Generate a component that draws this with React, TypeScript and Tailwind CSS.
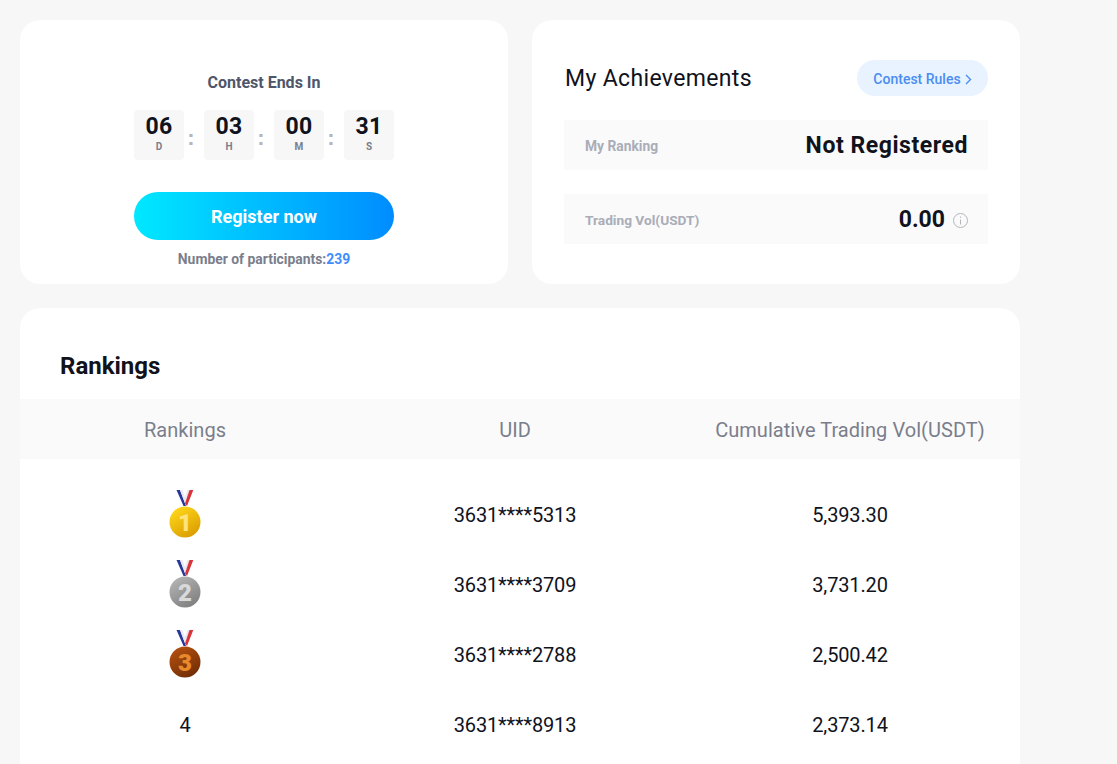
const FONT = "font-['Roboto','Liberation_Sans',sans-serif]";

const countdown = [
  { value: "06", unit: "D" },
  { value: "03", unit: "H" },
  { value: "00", unit: "M" },
  { value: "31", unit: "S" },
];

const rows = [
  { rank: 1, uid: "3631****5313", vol: "5,393.30" },
  { rank: 2, uid: "3631****3709", vol: "3,731.20" },
  { rank: 3, uid: "3631****2788", vol: "2,500.42" },
  { rank: 4, uid: "3631****8913", vol: "2,373.14" },
];

const medalColors: Record<number, { id: string; light: string; dark: string; text: string }> = {
  1: { id: "gold", light: "#ffd91a", dark: "#d99a00", text: "#ffe27a" },
  2: { id: "silver", light: "#b5b5b5", dark: "#7d7d7d", text: "#d9d9d9" },
  3: { id: "bronze", light: "#b5500f", dark: "#6e2c05", text: "#e88a2c" },
};

function Medal({ rank }: { rank: number }) {
  const c = medalColors[rank];
  return (
    <svg width="32" height="50" viewBox="0 0 32 50">
      <defs>
        <linearGradient id={c.id} x1="0.2" y1="0" x2="0.8" y2="1">
          <stop offset="0" stopColor={c.light} />
          <stop offset="1" stopColor={c.dark} />
        </linearGradient>
      </defs>
      {/* ribbon */}
      <path d="M7.5 0 L11 0 L17 16 L14.5 16 Z" fill="#27389a" />
      <path d="M11 0 L13.5 0 L17.5 12 L16.5 14.5 Z" fill="#e9e9f2" />
      <path d="M18.5 0 L20.5 0 L16.3 13 L15 9.5 Z" fill="#e9e9f2" />
      <path d="M20.5 0 L24.3 0 L18 16 L16 13.5 Z" fill="#d8343a" />
      <circle cx="16" cy="32" r="15.5" fill={`url(#${c.id})`} />
      <text x="16" y="40.5" textAnchor="middle" fontSize="24" fontWeight="900" fill={c.text} fontFamily="Roboto, sans-serif">
        {rank}
      </text>
    </svg>
  );
}

export default function App() {
  return (
    <div className={`${FONT} h-[764px] w-[1117px] overflow-hidden bg-[#f7f7f7] p-5`}>
      <div className="flex w-[1000px] flex-col gap-6">
        <div className="flex gap-6">
          {/* countdown card */}
          <div className="flex h-[264px] w-[488px] flex-col items-center rounded-[20px] bg-white pt-[53px]">
            <h2 className="text-[16px] leading-5 font-bold text-[#50566a]">Contest Ends In</h2>
            <div className="mt-[17px] flex w-[260px] justify-between">
              {countdown.map((item, i) => (
                <div key={item.unit} className="flex items-center">
                  {i > 0 && <span className="w-5 pt-[5px] pr-[6px] text-center font-['Liberation_Sans',sans-serif] text-[22px] leading-none font-bold text-[#b4b6be]">:</span>}
                  <div className="flex h-[50px] w-[50px] flex-col items-center rounded bg-[#f7f7f7] pt-[3px]">
                    <span className="text-[23px] leading-[27px] font-bold tracking-[0.3px] text-[#10121c]">{item.value}</span>
                    <span className="text-[10px] leading-[14px] font-bold text-[#7a7e8c]">{item.unit}</span>
                  </div>
                </div>
              ))}
            </div>
            <button className="mt-8 h-12 w-[260px] rounded-full bg-gradient-to-r from-[#00e8ff] to-[#008cff] pt-[2px] text-lg font-bold text-white">
              Register now
            </button>
            <p className="mt-[9px] text-[13.9px] leading-5 font-bold text-[#7a7e8c]">
              Number of participants:<span className="text-[#3f8cff]">239</span>
            </p>
          </div>

          {/* achievements card */}
          <div className="h-[264px] w-[488px] rounded-[20px] bg-white px-8 pt-10">
            <div className="flex h-9 items-center justify-between">
              <h2 className="h-9 pt-[1px] pl-px text-[23px] leading-9 tracking-[0.35px] text-[#10121c]">My Achievements</h2>
              <a className="flex h-9 w-[131px] items-center justify-center gap-1 rounded-full bg-[#e8f3ff] pt-[2px] text-sm font-medium text-[#4a8df0]">
                Contest Rules
                <svg width="7" height="11" viewBox="0 0 7 11" fill="none" stroke="#4a8df0" strokeWidth="1.4">
                  <path d="M1 1l4.5 4.5L1 10" />
                </svg>
              </a>
            </div>
            <div className="mt-6 flex h-[50px] items-center justify-between bg-[#fafafa] px-5 pt-[3px]">
              <span className="pl-px text-[13.8px] font-bold text-[#a9adb8]">My Ranking</span>
              <span className="text-[23px] font-bold tracking-[0.55px] text-[#10121c]">Not Registered</span>
            </div>
            <div className="mt-6 flex h-[50px] items-center justify-between bg-[#fafafa] px-5 pt-[2px]">
              <span className="pl-px text-[13.7px] font-bold text-[#a9adb8]">Trading Vol(USDT)</span>
              <span className="flex items-center gap-2">
                <span className="text-[23px] font-bold text-[#10121c]">0.00</span>
                <svg width="15" height="15" viewBox="0 0 15 15" fill="none" stroke="#b4b6be">
                  <circle cx="7.5" cy="7.5" r="7" />
                  <path d="M7.5 6.5v5M7.5 3.5v1.3" />
                </svg>
              </span>
            </div>
          </div>
        </div>

        {/* rankings card */}
        <div className="h-[500px] rounded-[20px] bg-white pt-[42px]">
          <h2 className="px-10 text-[24px] leading-8 font-bold text-[#10121c]">Rankings</h2>
          <div className="mt-[17px] grid h-[60px] grid-cols-[330px_330px_340px] items-center bg-[#fafafa] pt-[2px] text-xl font-[450] tracking-[0.05px] text-[#7a7e8c]">
            <span className="text-center">Rankings</span>
            <span className="text-center">UID</span>
            <span className="text-center">Cumulative Trading Vol(USDT)</span>
          </div>
          <div className="pt-[21px]">
            {rows.map((row) => (
              <div key={row.uid} className="grid h-[70px] grid-cols-[330px_330px_340px] items-center text-xl font-[450] tracking-[-0.15px] text-[#10121c]">
                <span className="flex justify-center">{row.rank <= 3 ? <Medal rank={row.rank} /> : row.rank}</span>
                <span className="text-center">{row.uid}</span>
                <span className="text-center">{row.vol}</span>
              </div>
            ))}
          </div>
        </div>
      </div>
    </div>
  );
}
